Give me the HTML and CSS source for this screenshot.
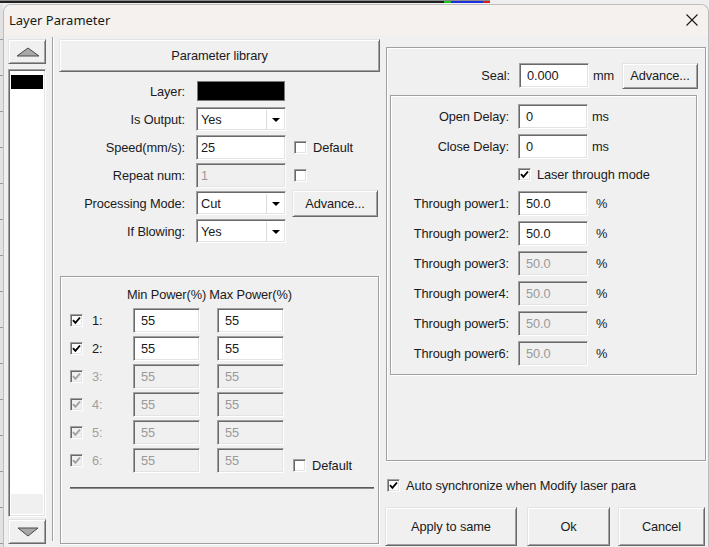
FILE: index.html
```html
<!DOCTYPE html>
<html>
<head>
<meta charset="utf-8">
<title>Layer Parameter</title>
<link rel="stylesheet" href="styles.css">
</head>
<body>
<div class="screen">
  <div class="strip">
    <div class="strip-dark"><span class="mk mk-g"></span><span class="mk mk-b"></span><span class="mk mk-r"></span></div>
  </div>
  <div class="desk">
    <div class="sliver"></div>
    <div class="window">
      <div class="titlebar">
        <span class="title">Layer Parameter</span>
        <svg class="close" width="12" height="12" viewBox="0 0 12 12"><path d="M0.5 0.5 L11.5 11.5 M11.5 0.5 L0.5 11.5" stroke="#1a1a1a" stroke-width="1.1" fill="none"/></svg>
      </div>
      <div class="body">
        <div class="leftcol">
          <div class="btn arrowbtn"><svg width="24" height="10" viewBox="0 0 24 10"><path d="M1 9 L12 1 L23 9 Z" fill="#a8a8a8" stroke="#4a4a4a" stroke-width="1"/></svg></div>
          <div class="list">
            <div class="list-item"></div>
            <div class="list-fill"></div>
            <div class="list-foot"></div>
          </div>
          <div class="btn arrowbtn down"><svg width="22" height="10" viewBox="0 0 22 10"><path d="M1 1 L11 9 L21 1 Z" fill="#a8a8a8" stroke="#4a4a4a" stroke-width="1"/></svg></div>
        </div>
        <div class="vsep"></div>
        <div class="midcol">
          <div class="btn libbtn">Parameter library</div>
          <div class="form">
            <div class="frow"><span class="flabel">Layer:</span><span class="colorbox"></span></div>
            <div class="frow"><span class="flabel">Is Output:</span>
              <div class="combo"><span class="combo-text">Yes</span><span class="combo-arrow"><i class="tri"></i></span></div>
            </div>
            <div class="frow"><span class="flabel">Speed(mm/s):</span>
              <div class="edit edit-l">25</div>
              <span class="cb cb-side"></span><span class="cbtext">Default</span>
            </div>
            <div class="frow"><span class="flabel">Repeat num:</span>
              <div class="edit edit-l dis">1</div>
              <span class="cb cb-side"></span>
            </div>
            <div class="frow"><span class="flabel">Processing Mode:</span>
              <div class="combo"><span class="combo-text">Cut</span><span class="combo-arrow"><i class="tri"></i></span></div>
              <div class="btn advbtn">Advance...</div>
            </div>
            <div class="frow"><span class="flabel">If Blowing:</span>
              <div class="combo"><span class="combo-text">Yes</span><span class="combo-arrow"><i class="tri"></i></span></div>
            </div>
          </div>
          <div class="group power">
            <div class="phead"><span class="phcell">Min Power(%)</span><span class="phcell phcell2">Max Power(%)</span></div>
            <div class="prow"><span class="cb"><svg width="9" height="9" viewBox="0 0 9 9"><path d="M1 4.2 L3.4 6.8 L8 1.5" stroke="#000" stroke-width="1.9" fill="none"/></svg></span><span class="plabel">1:</span><div class="edit pin">55</div><div class="edit pin pin2">55</div></div>
            <div class="prow"><span class="cb"><svg width="9" height="9" viewBox="0 0 9 9"><path d="M1 4.2 L3.4 6.8 L8 1.5" stroke="#000" stroke-width="1.9" fill="none"/></svg></span><span class="plabel">2:</span><div class="edit pin">55</div><div class="edit pin pin2">55</div></div>
            <div class="prow"><span class="cb dis"><svg width="9" height="9" viewBox="0 0 9 9"><path d="M1 4.2 L3.4 6.8 L8 1.5" stroke="#a0a0a0" stroke-width="1.9" fill="none"/></svg></span><span class="plabel dislabel">3:</span><div class="edit pin dis">55</div><div class="edit pin pin2 dis">55</div></div>
            <div class="prow"><span class="cb dis"><svg width="9" height="9" viewBox="0 0 9 9"><path d="M1 4.2 L3.4 6.8 L8 1.5" stroke="#a0a0a0" stroke-width="1.9" fill="none"/></svg></span><span class="plabel dislabel">4:</span><div class="edit pin dis">55</div><div class="edit pin pin2 dis">55</div></div>
            <div class="prow"><span class="cb dis"><svg width="9" height="9" viewBox="0 0 9 9"><path d="M1 4.2 L3.4 6.8 L8 1.5" stroke="#a0a0a0" stroke-width="1.9" fill="none"/></svg></span><span class="plabel dislabel">5:</span><div class="edit pin dis">55</div><div class="edit pin pin2 dis">55</div></div>
            <div class="prow"><span class="cb dis"><svg width="9" height="9" viewBox="0 0 9 9"><path d="M1 4.2 L3.4 6.8 L8 1.5" stroke="#a0a0a0" stroke-width="1.9" fill="none"/></svg></span><span class="plabel dislabel">6:</span><div class="edit pin dis">55</div><div class="edit pin pin2 dis">55</div>
              <span class="pdefault"><span class="cb"></span><span class="cbtext">Default</span></span>
            </div>
            <div class="hline"></div>
          </div>
        </div>
        <div class="rightcol">
          <div class="group outer">
            <div class="sealrow">
              <span class="slabel">Seal:</span>
              <div class="edit redit">0.000</div>
              <span class="unit">mm</span>
              <div class="btn sealadv">Advance...</div>
            </div>
            <div class="group inner">
              <div class="rrow"><span class="rlabel">Open Delay:</span><div class="edit redit">0</div><span class="unit">ms</span></div>
              <div class="rrow"><span class="rlabel">Close Delay:</span><div class="edit redit">0</div><span class="unit">ms</span></div>
              <div class="rrow rcheck"><span class="rlabel"></span><span class="cb cb-r"><svg width="9" height="9" viewBox="0 0 9 9"><path d="M1 4.2 L3.4 6.8 L8 1.5" stroke="#000" stroke-width="1.9" fill="none"/></svg></span><span class="cbtext">Laser through mode</span></div>
              <div class="rrow"><span class="rlabel">Through power1:</span><div class="edit redit">50.0</div><span class="unit pct">%</span></div>
              <div class="rrow"><span class="rlabel">Through power2:</span><div class="edit redit">50.0</div><span class="unit pct">%</span></div>
              <div class="rrow"><span class="rlabel">Through power3:</span><div class="edit redit dis">50.0</div><span class="unit pct">%</span></div>
              <div class="rrow"><span class="rlabel">Through power4:</span><div class="edit redit dis">50.0</div><span class="unit pct">%</span></div>
              <div class="rrow"><span class="rlabel">Through power5:</span><div class="edit redit dis">50.0</div><span class="unit pct">%</span></div>
              <div class="rrow"><span class="rlabel">Through power6:</span><div class="edit redit dis">50.0</div><span class="unit pct">%</span></div>
            </div>
          </div>
          <div class="sync"><span class="cb"><svg width="9" height="9" viewBox="0 0 9 9"><path d="M1 4.2 L3.4 6.8 L8 1.5" stroke="#000" stroke-width="1.9" fill="none"/></svg></span><span class="cbtext">Auto synchronize when Modify laser para</span></div>
          <div class="btnrow">
            <div class="btn bigbtn b-apply">Apply to same</div>
            <div class="btn bigbtn b-ok">Ok</div>
            <div class="btn bigbtn b-cancel">Cancel</div>
          </div>
        </div>
      </div>
    </div>
  </div>
</div>
</body>
</html>
```

FILE: styles.css
```css
* { box-sizing: border-box; }
html, body { margin: 0; padding: 0; }
body {
  width: 709px;
  height: 547px;
  overflow: hidden;
  background: #eeeeee;
  font-family: "Liberation Sans", Arial, sans-serif;
  font-size: 12.8px;
  letter-spacing: -0.1px;
  color: #1a1a22;
}
.screen { display: flex; flex-direction: column; width: 709px; height: 547px; }

/* background strip of the app behind */
.strip { height: 4px; display: flex; background: #efefef; }
.strip-dark {
  width: 490px; height: 3px;
  background: #1f1f1f;
  border-top: 1px solid #8c8c8c;
  display: flex; justify-content: flex-end;
}
.mk { display: block; height: 2px; }
.mk-g { width: 7px; background: #1fc51f; }
.mk-b { width: 32px; background: #1b2fe0; }
.mk-r { width: 7px; background: #e01b1b; }

.desk { display: flex; flex: 1; min-height: 0; }
.sliver {
  width: 3px;
  background: #e2e2e2 repeating-linear-gradient(to bottom, transparent 0, transparent 35px, #9a9a9a 35px, #9a9a9a 36px);
}
.window {
  flex: 1;
  display: flex; flex-direction: column;
  background: #f0f0f0;
  border: 1px solid #bdbdbd;
  border-bottom: 0;
  border-radius: 8px 8px 0 0;
  overflow: hidden;
}
.titlebar {
  height: 30px;
  flex: none;
  background: #f5f1ef;
  display: flex; align-items: center; justify-content: space-between;
  padding: 0 10px 0 5px;
}
.title { font-family: "Noto Sans", "Liberation Sans", sans-serif; font-size: 13px; letter-spacing: 0; color: #1a1a1a; }
.close { display: block; }

.body { flex: 1; display: flex; padding: 0 2px 0 4px; }

/* generic win32 classic controls */
.btn {
  background: #f0f0f0;
  border: 1px solid;
  border-color: #e3e3e3 #696969 #696969 #e3e3e3;
  box-shadow: inset 1px 1px 0 #fff, inset -1px -1px 0 #a0a0a0;
  display: flex; align-items: center; justify-content: center;
  color: #1a1a22;
  white-space: nowrap;
}
.edit {
  background: #fff;
  border: 1px solid;
  border-color: #a0a0a0 #fff #fff #a0a0a0;
  box-shadow: inset 1px 1px 0 #696969, inset -1px -1px 0 #e3e3e3;
  display: flex; align-items: center;
  padding-left: 7px;
  color: #1a1a22;
  white-space: nowrap;
}
.edit.dis { background: #f0f0f0; color: #9a9a9a; }
.cb {
  width: 13px; height: 13px; flex: none;
  background: #fff;
  border: 1px solid;
  border-color: #a0a0a0 #fff #fff #a0a0a0;
  box-shadow: inset 1px 1px 0 #696969, inset -1px -1px 0 #e3e3e3;
  display: flex; align-items: center; justify-content: center;
}
.cb svg { display: block; }
.cb.dis { background: #f0f0f0; }
.cbtext { margin-left: 6px; white-space: nowrap; }
.group {
  border: 1px solid #a0a0a0;
  box-shadow: inset 1px 1px 0 #fff, 1px 1px 0 #fff;
}

/* left column */
.leftcol { width: 38px; flex: none; display: flex; flex-direction: column; padding-top: 4px; }
.arrowbtn { height: 25px; }
.arrowbtn svg { display: block; margin-left: 1px; }
.arrowbtn.down { margin-top: 2px; }
.list {
  margin-top: 5px;
  height: 448px;
  background: #fff;
  border: 1px solid;
  border-color: #a0a0a0 #fff #fff #a0a0a0;
  box-shadow: inset 1px 1px 0 #696969, inset -1px -1px 0 #e3e3e3;
  padding: 2px;
  display: flex; flex-direction: column;
}
.list-item { height: 14px; margin-top: 3px; background: #000; }
.list-fill { flex: 1; }
.list-foot { height: 20px; background: #f0f0f0; }

.vsep {
  width: 2px; flex: none;
  margin: 2px 0 0 6px;
  height: 504px;
  border-left: 1px solid #a0a0a0;
  border-right: 1px solid #fff;
}

/* middle column */
.midcol { width: 321px; flex: none; margin-left: 5px; padding-top: 4px; display: flex; flex-direction: column; }
.libbtn { height: 33px; }
.form { margin-top: 5px; }
.frow { height: 28px; display: flex; align-items: center; }
.flabel { width: 126px; text-align: right; white-space: nowrap; }
.colorbox {
  width: 88px; height: 20px; margin-left: 12px;
  background: #000;
  border: 1px solid #7a7a7a;
}
.combo {
  width: 90px; height: 24px; margin-left: 11px;
  display: flex;
  background: #fff;
  border: 1px solid;
  border-color: #a0a0a0 #fff #fff #a0a0a0;
  box-shadow: inset 1px 1px 0 #696969, inset -1px -1px 0 #e3e3e3;
  padding: 2px 1px 1px 2px;
}
.combo-text { flex: 1; display: flex; align-items: center; padding-left: 2px; }
.combo-arrow {
  width: 18px;
  border-left: 1px solid #dcdcdc;
  display: flex; align-items: center; justify-content: center;
}
.tri {
  display: block; width: 0; height: 0;
  border-left: 4px solid transparent;
  border-right: 4px solid transparent;
  border-top: 4px solid #000;
}
.edit-l { width: 90px; height: 25px; margin-left: 11px; padding-left: 4px; }
.cb-side { margin-left: 8px; }
.advbtn { width: 86px; height: 27px; margin-left: 6px; }

.power { margin: 31px 1px 0 1px; height: 268px; padding: 9px 0 0 9px; }
.phead { height: 16px; display: flex; align-items: center; padding-left: 63px; }
.phcell { width: 67px; display: flex; justify-content: center; white-space: nowrap; }
.phcell2 { margin-left: 17px; }
.prow { height: 28px; display: flex; align-items: center; }
.phead + .prow { margin-top: 4px; }
.plabel { width: 50px; padding-left: 9px; }
.dislabel { color: #a0a0a0; }
.pin { width: 67px; height: 25px; }
.pin2 { margin-left: 17px; }
.pdefault { display: flex; align-items: center; margin-left: 9px; align-self: flex-end; margin-bottom: 1px; }
.hline {
  margin: 13px 0 0 0;
  width: 304px; height: 2px;
  border-top: 1px solid #5a5a5a;
  border-bottom: 1px solid #8a8a8a;
}

/* right column */
.rightcol { width: 320px; flex: none; margin-left: 6px; display: flex; flex-direction: column; }
.outer { margin-top: 12px; height: 414px; padding: 14px 8px 0 2px; }
.sealrow { height: 27px; display: flex; align-items: center; }
.slabel { width: 121px; text-align: right; }
.redit { width: 70px; height: 25px; margin-left: 9px; }
.unit { margin-left: 4px; white-space: nowrap; }
.unit.pct { margin-left: 8px; }
.sealadv { width: 76px; height: 26px; margin-left: auto; margin-right: -1px; }
.inner { margin-top: 6px; margin-left: 1px; padding: 5px 0 6px 0; }
.rrow { height: 30px; display: flex; align-items: center; }
.rrow.rcheck { height: 27px; }
.rlabel { width: 118px; text-align: right; white-space: nowrap; }
.cb-r { margin-left: 9px; }

.sync { margin-top: 14px; height: 20px; display: flex; align-items: center; padding-left: 1px; }
.btnrow { margin-top: 12px; display: flex; }
.bigbtn { height: 39px; }
.b-apply { width: 132px; margin-left: -1px; }
.b-ok { width: 83px; margin-left: 10px; }
.b-cancel { width: 87px; margin-left: 8px; }
```
